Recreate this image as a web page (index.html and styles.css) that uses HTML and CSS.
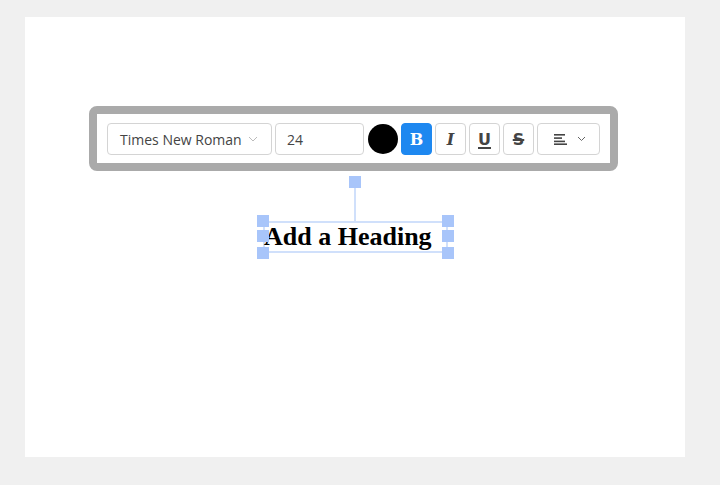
FILE: index.html
```html
<!DOCTYPE html>
<html lang="en">
<head>
  <meta charset="UTF-8" />
  <title>Text Editor</title>
  <link rel="stylesheet" href="styles.css">
</head>
<body>
  <div class="canvas">
    <div class="toolbar">
      <div class="font-select">
        <span>Times New Roman</span>
        <svg class="chevron" width="10" height="6" viewBox="0 0 10 6"><path d="M1 1l4 4 4-4" fill="none" stroke="#bbb" stroke-width="1"/></svg>
      </div>
      <div class="size-input">24</div>
      <div class="color-dot"></div>
      <button class="btn bold active">B</button>
      <button class="btn italic">I</button>
      <button class="btn underline">U</button>
      <button class="btn strike">S</button>
      <button class="btn align">
        <svg width="14" height="12" viewBox="0 0 14 12">
          <rect x="0" y="1" width="11" height="1.6" fill="#444"/>
          <rect x="0" y="4.3" width="8" height="1.6" fill="#444"/>
          <rect x="0" y="7.6" width="11" height="1.6" fill="#444"/>
          <rect x="0" y="10.4" width="13" height="1.6" fill="#444"/>
        </svg>
        <svg width="9" height="6" viewBox="0 0 9 6"><path d="M1 1l3.5 3.5 3.5-3.5" fill="none" stroke="#666" stroke-width="1"/></svg>
      </button>
    </div>

    <div class="text-box">
      <span class="heading">Add a Heading</span>
      <div class="rotate-line"></div>
      <div class="handle rotate"></div>
      <div class="handle tl"></div>
      <div class="handle ml"></div>
      <div class="handle bl"></div>
      <div class="handle tr"></div>
      <div class="handle mr"></div>
      <div class="handle br"></div>
    </div>
  </div>
</body>
</html>
```

FILE: styles.css
```css
body {
  margin: 0;
  padding: 17px 25px;
  background: #f0f0f0;
  font-family: 'Open Sans', sans-serif;
}
.canvas {
  position: relative;
  width: 660px;
  height: 440px;
  background: white;
}
.toolbar {
  position: absolute;
  left: 64px;
  top: 89px;
  display: flex;
  align-items: center;
  gap: 3px;
  padding: 9px 10px 8px;
  background: white;
  border: 8px solid #aaa;
  border-radius: 8px;
}
.font-select, .size-input, .btn {
  box-sizing: border-box;
  height: 32px;
  border: 1px solid #d4d4d4;
  border-radius: 4px;
  background: white;
  color: #444;
}
.font-select {
  width: 165px;
  display: flex;
  align-items: center;
  justify-content: space-between;
  padding: 0 13px 0 12px;
  font-size: 14px;
}
.size-input {
  width: 89px;
  display: flex;
  align-items: center;
  padding-left: 11px;
  font-size: 14px;
}
.color-dot {
  width: 30px;
  height: 30px;
  margin-left: 1px;
  border-radius: 50%;
  background: #000;
}
.btn {
  width: 31px;
  padding: 0;
  display: flex;
  align-items: center;
  justify-content: center;
  font-size: 16px;
  font-weight: bold;
  cursor: pointer;
}
.bold {
  font-family: 'DejaVu Serif', serif;
}
.btn.active {
  background: #1e88f0;
  border-color: #1e88f0;
  color: white;
}
.italic {
  font-family: 'DejaVu Serif', serif;
  font-style: italic;
}
.underline {
  font-family: 'DejaVu Sans', sans-serif;
  text-decoration: underline;
  text-decoration-thickness: 2px;
  text-underline-offset: 2px;
}
.strike {
  font-family: 'DejaVu Sans', sans-serif;
  text-decoration: line-through;
  text-decoration-thickness: 2px;
}
.btn.align {
  width: 63px;
  gap: 9px;
  padding-left: 2px;
}
.text-box {
  position: absolute;
  left: 238px;
  top: 204px;
  box-sizing: border-box;
  width: 185px;
  height: 32px;
  border: 2px solid #d0e0fb;
}
.heading {
  display: block;
  margin-left: -1px;
  font-family: 'Liberation Serif', serif;
  font-weight: bold;
  font-size: 26px;
  line-height: 28px;
  white-space: nowrap;
  color: #000;
}
.handle {
  position: absolute;
  width: 12px;
  height: 12px;
  background: #a8c5fa;
}
.tl { left: -8px; top: -8px; }
.ml { left: -8px; top: 7px; }
.bl { left: -8px; bottom: -8px; }
.tr { right: -8px; top: -8px; }
.mr { right: -8px; top: 7px; }
.br { right: -8px; bottom: -8px; }
.rotate {
  left: 84px;
  top: -47px;
}
.rotate-line {
  position: absolute;
  left: 89px;
  top: -35px;
  width: 2px;
  height: 33px;
  background: #d0e0fb;
}
```
